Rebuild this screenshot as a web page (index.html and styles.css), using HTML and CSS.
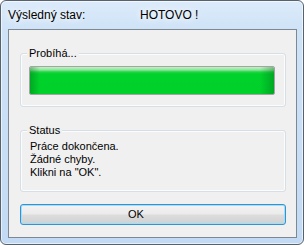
FILE: index.html
```html
<!DOCTYPE html>
<html lang="cs">
<head>
<meta charset="utf-8">
<title>Výsledný stav</title>
<link rel="stylesheet" href="styles.css">
</head>
<body>
<div class="win">
  <div class="titlebar">
    <span class="title-label">Výsledný stav:</span>
    <span class="title-value">HOTOVO !</span>
  </div>
  <div class="client">
    <div class="group group-progress">
      <span class="group-label">Probíhá...</span>
      <div class="progress"><div class="progress-fill"></div></div>
    </div>
    <div class="group group-status">
      <span class="group-label">Status</span>
      <div class="status-line">Práce dokončena.</div>
      <div class="status-line">Žádné chyby.</div>
      <div class="status-line">Klikni na "OK".</div>
    </div>
    <button class="btn" type="button"><span class="btn-text">OK</span></button>
  </div>
</div>
</body>
</html>
```
FILE: styles.css
```css
html, body {
  margin: 0;
  padding: 0;
  background: #ffffff;
}

.win {
  width: 304px;
  height: 245px;
  box-sizing: border-box;
  border: 1px solid #58626d;
  border-radius: 6px;
  background: linear-gradient(180deg, #dcebfa 0px, #cfe3f7 28px, #c2daf3 100%);
  box-shadow: inset 0 0 0 1px rgba(255, 255, 255, 0.6);
  padding: 0 6px 6px 7px;
  display: flex;
  flex-direction: column;
  font-family: "Liberation Sans", Arial, sans-serif;
}

.titlebar {
  height: 28px;
  box-sizing: border-box;
  padding-top: 7px;
  display: flex;
  font-size: 12px;
  line-height: 14px;
  color: #000000;
  text-shadow: 0 0 6px #ffffff, 0 0 10px #ffffff;
}

.title-label {
  width: 132px;
}

.client {
  flex: 1;
  border: 1px solid #7d8894;
  background: #f0f0f0;
  padding: 23px 10px 12px 11px;
  display: flex;
  flex-direction: column;
  font-size: 11px;
  line-height: 13px;
  color: #000000;
}

.group {
  position: relative;
  border: 1px solid #d5dfe5;
  border-radius: 3px;
  box-shadow: inset 0 0 0 1px #fbfcfd;
}

.group-label {
  position: absolute;
  top: -7px;
  left: 6px;
  padding: 0 2px;
  background: #f0f0f0;
  line-height: 13px;
}

.group-progress {
  padding: 12px 10px 11px 8px;
}

.progress {
  height: 29px;
  box-sizing: border-box;
  border: 1px solid #a4a4a4;
  border-radius: 2px;
  background: #e6e6e6;
  overflow: hidden;
}

.progress-fill {
  height: 100%;
  background:
    linear-gradient(90deg, rgba(0, 90, 20, 0.35) 0px, rgba(0, 90, 20, 0) 10px, rgba(0, 90, 20, 0) calc(100% - 14px), rgba(0, 90, 20, 0.35) 100%),
    linear-gradient(180deg, #bff2c4 0px, #8ee49a 3px, #1fd545 5px, #00d22b 7px, #00d12a 100%);
}

.group-status {
  margin-top: 23px;
  padding: 9px 10px 12px 9px;
}

.status-line {
  white-space: nowrap;
}

.btn {
  margin: 12px 0 0 0;
  height: 21px;
  box-sizing: border-box;
  padding: 0 34px 0 0;
  border: 1px solid #3591cf;
  border-radius: 3px;
  background: linear-gradient(180deg, #f3f3f3 0%, #ebebeb 48%, #dddddd 52%, #d0d0d0 100%);
  box-shadow: inset 0 0 0 1px #9fe0f8;
  font-family: "Liberation Sans", Arial, sans-serif;
  font-size: 11px;
  line-height: 13px;
  color: #000000;
  display: flex;
  align-items: center;
  justify-content: center;
}
```
